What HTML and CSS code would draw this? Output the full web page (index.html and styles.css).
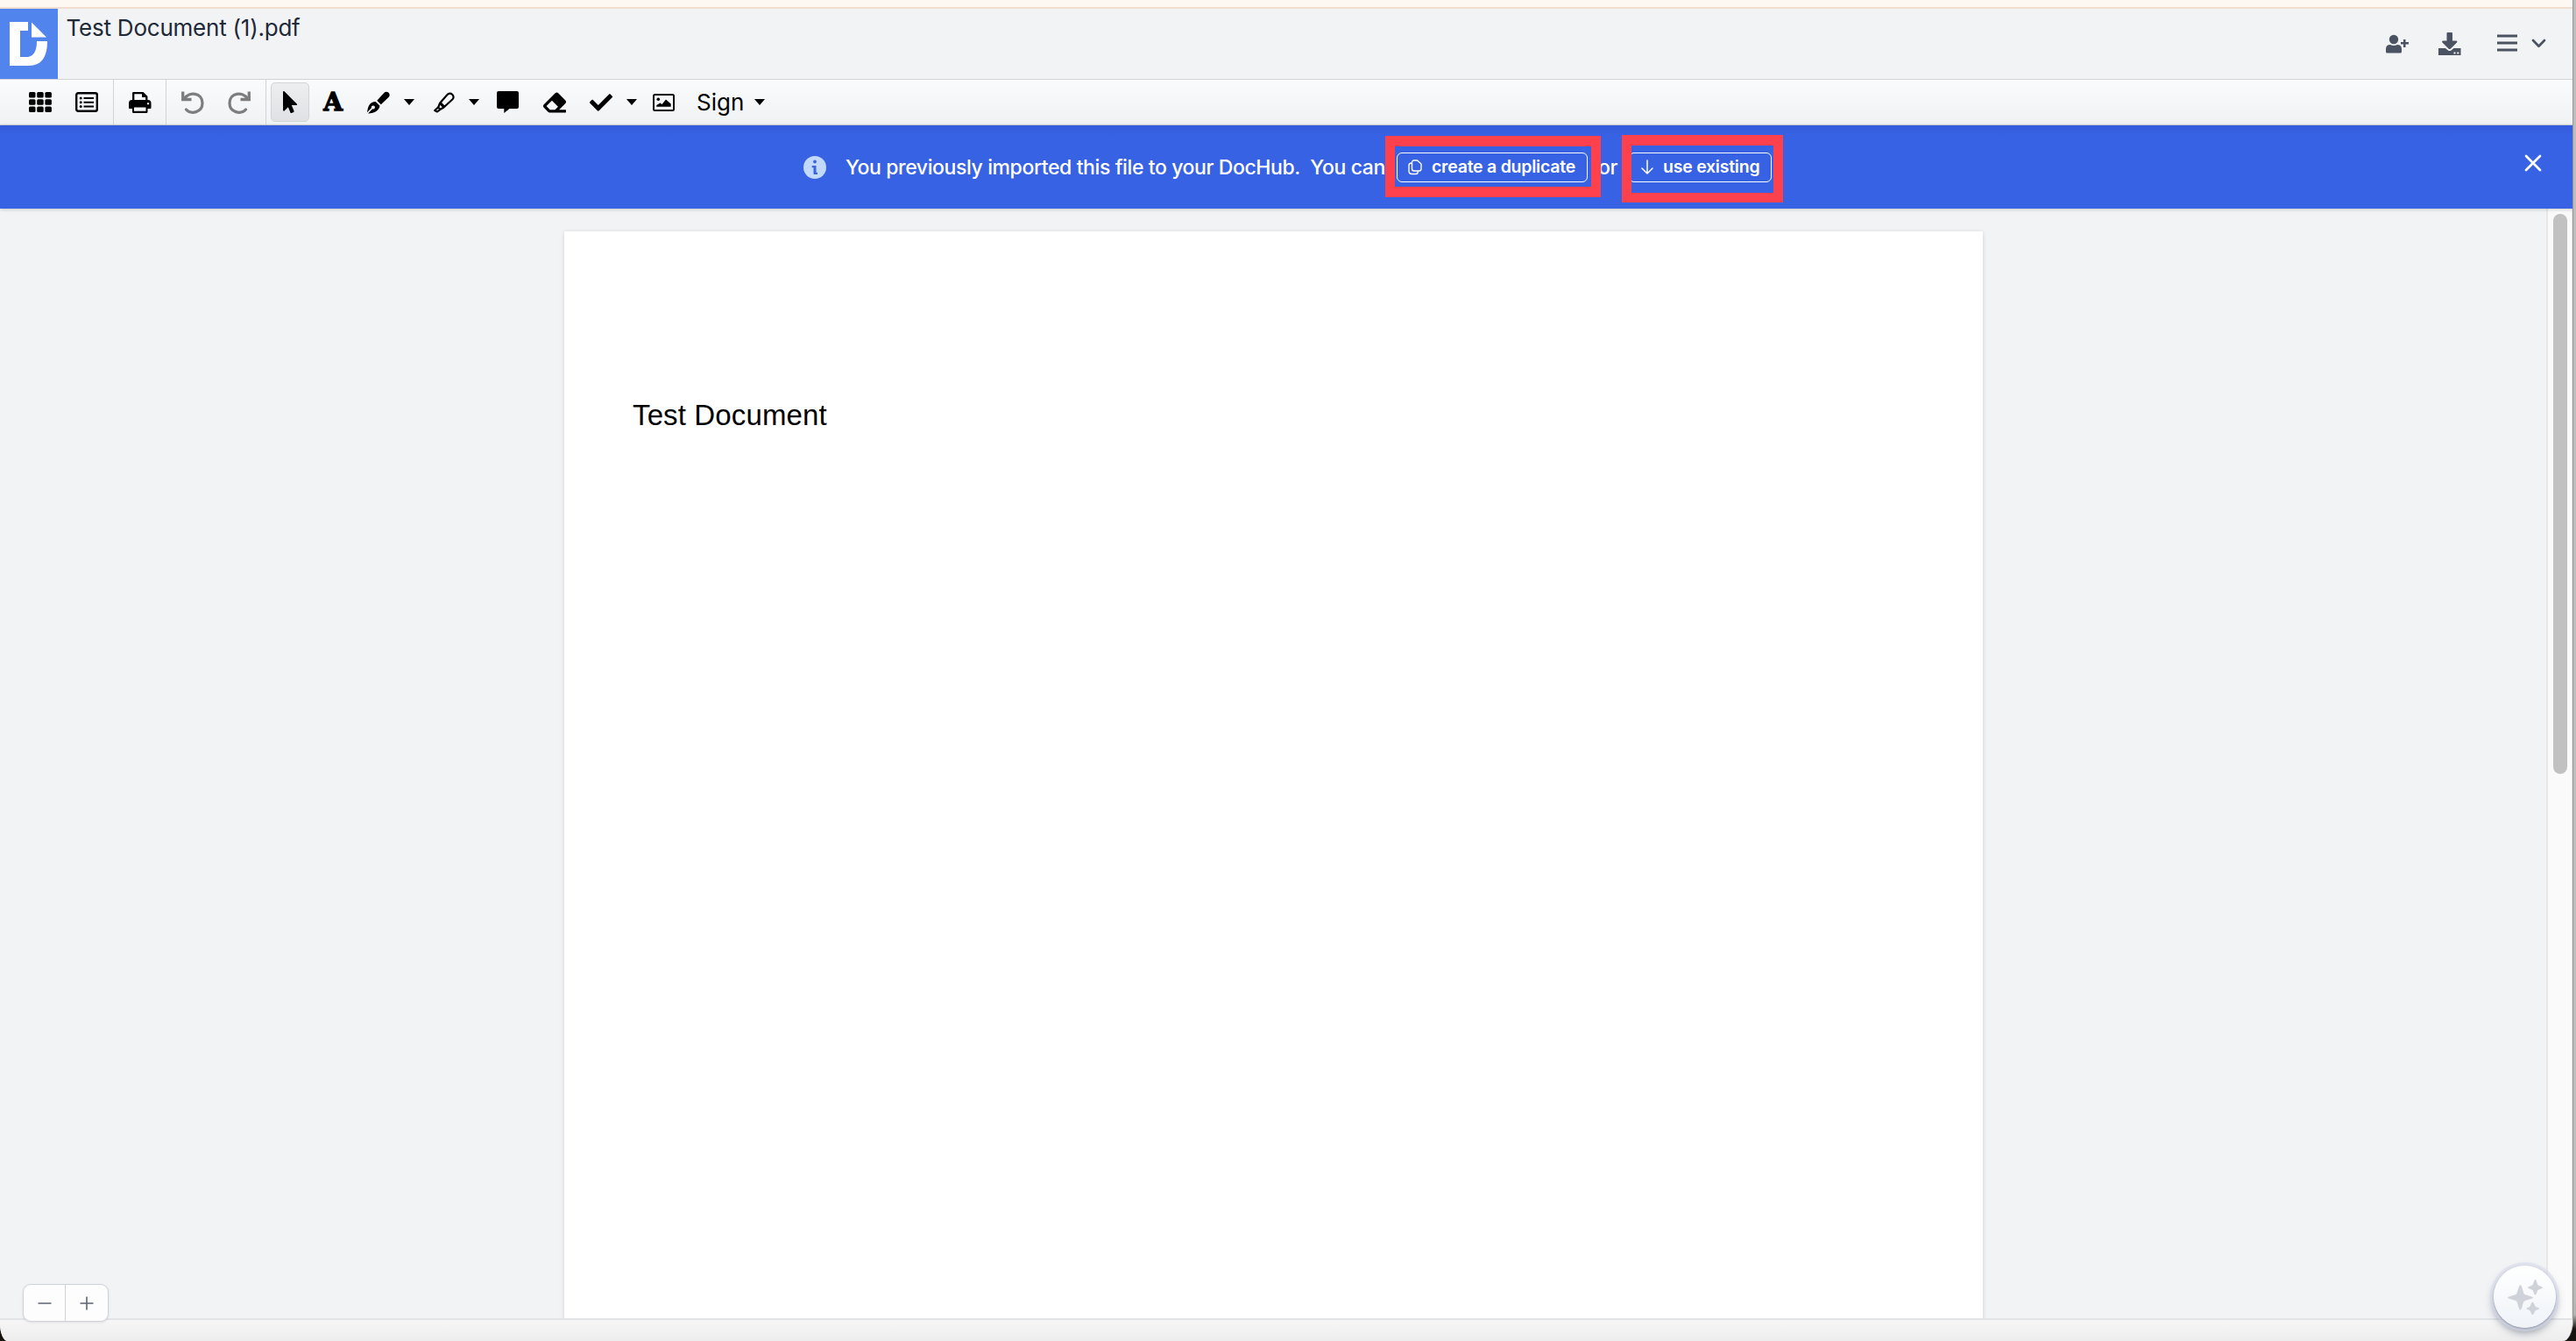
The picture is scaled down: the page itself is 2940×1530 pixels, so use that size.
FILE: index.html
```html
<!DOCTYPE html>
<html lang="en">
<head>
<meta charset="utf-8">
<title>Test Document (1).pdf</title>
<link rel="stylesheet" href="styles.css">
</head>
<body>
<div class="window">
  <div class="strip"></div>
  <header class="header">
    <div class="logo">
      <svg width="66" height="80" viewBox="0 0 66 80"><path fill="#fff" d="M11 15H32V25H23V55H32Q42 53 42 37H54Q54 65 33 65H11ZM36 15.500L53 32.500H36Z"/></svg>
    </div>
    <h1 class="filename">Test Document (1).pdf</h1>
    <div class="actions">
      <svg class="user" width="26" height="22" viewBox="0 0 26 22"><circle cx="9" cy="6" r="5.200"/><path d="M0 20V17Q0 12 5 12Q9 14 13 12Q18 12 18 17V20Q18 21.500 16.500 21.500H1.500Q0 21.500 0 20ZM20 6H22.500V9H26V11.500H22.500V15H20V11.500H17V9H20Z"/></svg>
      <svg class="download" width="26" height="26" viewBox="0 0 26 26"><path d="M9.500 1Q9.500 0 10.500 0H15Q16 0 16 1V9.500H20.500Q22 10 21 11.500L14 18.500Q12.800 19.500 11.500 18.500L4.500 11.500Q3.500 10 5 9.500H9.500Z"/><path fill-rule="evenodd" d="M0 18H8L11 20.500Q12.800 21.600 14.500 20.500L17.500 18H25.500V26H0ZM17.500 22.500V24.500H19.500V22.500ZM21.300 22.500V24.500H23.300V22.500Z"/></svg>
      <svg class="menu" width="23" height="21" viewBox="0 0 23 21"><path d="M0 .5H23V3.500H0ZM0 8.500H23V11.500H0ZM0 16.500H23V19.500H0Z"/></svg>
      <svg class="chevron" width="17" height="12" viewBox="0 0 17 12"><path fill="none" stroke="#4b5362" stroke-width="2.700" stroke-linecap="round" stroke-linejoin="round" d="M2 2L8.500 8.700L15 2"/></svg>
    </div>
  </header>

  <div class="toolbar">
    <div class="group pages">
      <div class="tool"><svg width="26" height="23" viewBox="0 0 26 23"><g><rect width="7.500" height="6.500" rx="1.500"/><rect x="9.200" width="7.500" height="6.500" rx="1.500"/><rect x="18.400" width="7.500" height="6.500" rx="1.500"/><rect y="8.200" width="7.500" height="6.500" rx="1.500"/><rect x="9.200" y="8.200" width="7.500" height="6.500" rx="1.500"/><rect x="18.400" y="8.200" width="7.500" height="6.500" rx="1.500"/><rect y="16.400" width="7.500" height="6.500" rx="1.500"/><rect x="9.200" y="16.400" width="7.500" height="6.500" rx="1.500"/><rect x="18.400" y="16.400" width="7.500" height="6.500" rx="1.500"/></g></svg></div>
      <div class="tool"><svg width="26" height="23" viewBox="0 0 26 23"><rect x="1.200" y="1.200" width="23.600" height="20.600" rx="2" fill="none" stroke="#000" stroke-width="2.400"/><circle cx="6.200" cy="7" r="1.500"/><circle cx="6.200" cy="11.700" r="1.500"/><circle cx="6.200" cy="16.400" r="1.500"/><path d="M9.500 6H21V8.100H9.500ZM9.500 10.700H21V12.800H9.500ZM9.500 15.400H21V17.500H9.500Z"/></svg></div>
    </div>
    <div class="group print">
      <div class="tool"><svg width="26" height="24" viewBox="0 0 26 24"><path d="M5.200 10V1.200H16.200L20.300 5.200V10" fill="none" stroke="#000" stroke-width="2.300" stroke-linejoin="round"/><path d="M15 1V6H21Z"/><path fill-rule="evenodd" d="M3.500 9H22Q25.500 9 25.500 13V18Q25.500 19 24.500 19H21.500V22.500Q21.500 24 20 24H5.500Q4 24 4 22.500V19H1Q0 19 0 18V13Q0 9 3.500 9ZM6 17.500V21.700H19.500V17.500ZM21 12.200V14.200H23.200V12.200Z"/></svg></div>
    </div>
    <div class="group history">
      <div class="tool"><svg width="26" height="26" viewBox="0 0 26 26"><g fill="none" stroke="#7d7d7d" stroke-width="3.200"><path d="M3.500 8.500C9 0 24 1.500 24 13.500C24 24.500 11 27 5.500 21" stroke-linecap="round"/><path d="M1.700 .500V9.500H11.500" stroke-width="3.300"/></g></svg></div>
      <div class="tool"><svg width="26" height="26" viewBox="0 0 26 26"><g fill="none" stroke="#7d7d7d" stroke-width="3.200" transform="matrix(-1 0 0 1 26 0)"><path d="M3.500 8.500C9 0 24 1.500 24 13.500C24 24.500 11 27 5.500 21" stroke-linecap="round"/><path d="M1.700 .500V9.500H11.500" stroke-width="3.300"/></g></svg></div>
    </div>
    <div class="group edit">
      <div class="tool selected"><svg width="16" height="25" viewBox="0 0 320 512" preserveAspectRatio="none"><path d="M302.189 329.126H196.105l55.831 135.993c3.889 9.428-.555 19.999-9.444 23.999l-49.165 21.427c-9.165 4-19.443-.571-23.332-9.714l-53.053-129.136-86.664 89.138C18.729 472.710 0 463.554 0 447.977V18.299C0 1.899 19.921-6.096 30.277 5.443l284.412 292.542c11.472 11.179 3.007 31.141-12.500 31.141z"/></svg></div>
      <div class="tool letter">A</div>
      <div class="tool pen"><svg width="26" height="26" viewBox="0 0 26 26"><path d="M11.300 10.800L19.500 1.800C22.500-1.200 28 3.200 24.700 6.700L15.800 15.300ZM9.700 12L14.500 16.800C13.500 22.200 9 25 1 25.500L6.200 20.300A2 2 0 1 0 5 19L0 24.300C1 17 3 12.300 9.700 12Z"/></svg></div>
      <div class="caret"></div>
      <div class="tool marker"><svg width="24" height="24" viewBox="0 0 24 24"><path fill="none" stroke="#000" stroke-width="2.200" stroke-linejoin="round" d="M7 12.800L15.500 3C19-1 25 4.500 21.500 8.300L11.500 17.500ZM7 12.800L5.200 17.500L7.500 19.800L11.500 17.500M5 17.500L1.200 21L4 22.500L7.500 19.800M8 12.500L12.500 17"/></svg></div>
      <div class="caret tight"></div>
      <div class="tool comment"><svg width="25" height="25" viewBox="0 0 25 25"><path d="M2 0H23Q25 0 25 2V18Q25 20 23 20H14.500L8.300 25V20H2Q0 20 0 18V2Q0 0 2 0Z"/></svg></div>
      <div class="tool eraser"><svg width="26" height="26" viewBox="0 0 512 512"><path d="M497.941 273.941c18.745-18.745 18.745-49.137 0-67.882l-160-160c-18.745-18.745-49.136-18.746-67.883 0l-256 256c-18.745 18.745-18.745 49.137 0 67.882l96 96A48.004 48.004 0 0 0 144 480h356c6.627 0 12-5.373 12-12v-40c0-6.627-5.373-12-12-12H355.883l142.058-142.059zm-302.627-62.627l137.373 137.373L265.373 416H150.628l-80-80 124.686-124.686z"/></svg></div>
      <div class="tool check"><svg width="26" height="26" viewBox="0 0 512 512"><path d="M173.898 439.404l-166.400-166.400c-9.997-9.997-9.997-26.206 0-36.204l36.203-36.204c9.997-9.998 26.207-9.998 36.204 0L192 312.690 432.095 72.596c9.997-9.997 26.207-9.997 36.204 0l36.203 36.204c9.997 9.997 9.997 26.206 0 36.204l-294.400 294.401c-9.998 9.997-26.207 9.997-36.204-.001z"/></svg></div>
      <div class="caret wide"></div>
      <div class="tool image"><svg width="25" height="20" viewBox="0 0 25 20"><rect x="1" y="1" width="23" height="18" rx="1.500" fill="none" stroke="#000" stroke-width="2"/><circle cx="6.300" cy="6.300" r="1.800"/><path d="M4.300 14.800V13L8.500 10.500L10.500 12L15 6.500L20.700 11.500V14.800Z"/></svg></div>
      <div class="sign">Sign</div>
      <div class="caret"></div>
    </div>
  </div>

  <div class="banner">
    <svg class="info" width="26" height="26" viewBox="0 0 26 26"><circle cx="13" cy="13" r="13" fill="#c3d9fc"/><g fill="#3b65dc"><circle cx="13" cy="6.500" r="1.900"/><path d="M9.700 11H14.500V18.800H16V21H12Q11.500 21 11.500 20V13.200H9.700Z"/></g></svg>
    <span class="message">You previously imported this file to your DocHub.&nbsp; You can</span>
    <div class="choice duplicate">
      <button class="button"><svg width="16" height="18" viewBox="0 0 16 18"><path fill="none" stroke="#fff" stroke-width="1.400" stroke-linejoin="round" d="M7 1H10.500L15 5V10.500Q15 13 12.500 13H7Q4.500 13 4.500 10.500V3.500Q4.500 1 7 1ZM4.500 4H4Q1 4 1 7V13Q1 16.500 4.500 16.500H9Q11.500 16.500 11.500 13"/></svg><span>create a duplicate</span></button>
      <div class="highlight"></div>
    </div>
    <span class="or">or</span>
    <div class="choice existing">
      <button class="button"><svg width="14" height="17" viewBox="0 0 14 17"><path fill="none" stroke="#fff" stroke-width="1.500" stroke-linecap="round" stroke-linejoin="round" d="M7 1V16M1 10L7 16L13 10"/></svg><span>use existing</span></button>
      <div class="highlight"></div>
    </div>
    <svg class="close" width="20" height="20" viewBox="0 0 20 20"><path stroke="#fff" stroke-width="2.700" stroke-linecap="round" d="M2 2L18 18M18 2L2 18"/></svg>
  </div>

  <div class="workspace">
    <main class="canvas">
      <article class="page"><p>Test Document</p></article>
    </main>
    <div class="scrollbar"><div class="thumb"></div></div>
  </div>
  <div class="bottom-track"></div>

  <div class="zoom">
    <button><svg width="16" height="16" viewBox="0 0 16 16"><path stroke="#5b6270" stroke-width="1.600" d="M.5 8H15.500"/></svg></button>
    <button><svg width="16" height="16" viewBox="0 0 16 16"><path stroke="#5b6270" stroke-width="1.600" d="M.5 8H15.500M8 .5V15.500"/></svg></button>
  </div>
  <button class="assistant"><svg width="40" height="40" viewBox="0 0 40 40"><path fill="#cfd2d8" d="M14.500 6C16.500 6 17.500 15 19 16.500S29 19 29 20.500S21 23 19 24.500S16.500 34.500 14.500 34.500S11.500 26 10 24.500S0 22 0 20.500S8.500 18 10 16.500S12.500 6 14.500 6ZM31.500 0C33 0 33.500 5 34.500 6S40 8 40 9S35.500 11 34.500 12S33 17.500 31.500 17.500S29.500 13 28.500 12S23 10 23 9S27.500 7 28.500 6S30 0 31.500 0ZM28.500 25.500C30 25.500 30.500 29.500 31.500 30.500S36 32 36 33S32.500 34.500 31.500 35.500S30 40 28.500 40S26.500 36.500 25.500 35.500S21.500 34 21.500 33S24.500 31.500 25.500 30.500S27 25.500 28.500 25.500Z"/></svg></button>
</div>
</body>
</html>
```
FILE: styles.css
```css
* { box-sizing: border-box; }
body {
  margin: 0;
  width: 2940px;
  height: 1530px;
  overflow: hidden;
  background: linear-gradient(#bdbdbd 0 1440px, #b4b4b2 1500px, #17140f 1516px);
  font-family: Inter, sans-serif;
}
svg { display: block; flex: none; }
button { font: inherit; padding: 0; border: 0; background: none; color: inherit; }

.window {
  position: relative;
  display: flex;
  flex-direction: column;
  width: 2937px;
  height: 1530px;
  overflow: hidden;
  background: #f2f3f5;
  border-right: 1px solid #969696;
  border-radius: 0 0 12px 9px / 0 0 24px 20px;
}
.strip { height: 10px; flex: none; background: #fef8f3; border-bottom: 2px solid #f0dfd1; }

.header { display: flex; height: 81px; flex: none; border-bottom: 1px solid #d1d3d7; background: #f2f3f5; }
.logo { width: 66px; height: 80px; background: #5284ee; }
.filename { margin: 6px 0 0 9.500px; font-size: 26px; font-weight: 400; line-height: 32px; letter-spacing: -.220px; color: #202938; white-space: nowrap; }
.actions { display: flex; align-items: center; margin-left: auto; padding: 0 30px 1px 0; fill: #4b5362; }
.download { margin-left: 34px; }
.menu { margin-left: 41px; }
.chevron { margin-left: 16px; }

.toolbar {
  display: flex;
  height: 52px;
  flex: none;
  border-bottom: 1px solid #cfd1d6;
  background: linear-gradient(#fafbfd, #f1f2f4);
}
.group { display: flex; align-items: center; justify-content: center; flex: none; border-right: 1px solid #d1d3d7; }
.pages { width: 130px; padding-left: 16px; }
.print { width: 60px; }
.history { width: 114px; }
.edit { border: 0; padding-left: 5px; }
.tool { display: flex; align-items: center; justify-content: center; width: 53px; flex: none; }
.selected { width: 44px; height: 45px; border: 1.500px solid #d0d3d8; border-radius: 5px; background: linear-gradient(#edeef0, #dfe1e4); }
.letter { width: 54px; font: bold 28px/46px "DejaVu Serif", serif; -webkit-text-stroke: 1.300px #000; }
.pen { width: 50px; }
.marker { width: 57px; margin-left: 2px; }
.comment { width: 67px; }
.eraser { width: 40px; }
.check { width: 54px; margin-left: 6px; }
.image { width: 59px; }
.sign { margin-left: 8px; width: 62px; font-size: 26px; line-height: 46px; }
.caret { display: flex; justify-content: center; width: 19px; flex: none; }
.caret.tight { width: 11px; }
.caret.wide { width: 15px; }
.caret::before { content: ""; flex: none; border: 6px solid transparent; border-top: 7px solid #000; border-bottom: 0; }

.banner {
  position: relative;
  z-index: 1;
  display: flex;
  align-items: center;
  height: 95px;
  flex: none;
  padding: 0 35px 0 917px;
  background: linear-gradient(#345cdb, #3862e4 12px);
  box-shadow: 0 1px 4px rgba(0, 0, 0, .2);
  color: #fff;
  font-size: 23px;
}
.message { width: 629px; margin-left: 22px; font-weight: 500; letter-spacing: -.395px; white-space: nowrap; }
.choice { position: relative; flex: none; }
.button {
  display: flex;
  align-items: center;
  width: 218px;
  height: 34px;
  padding-left: 12px;
  border: 1px solid #fff;
  border-radius: 6px;
  font-size: 19.500px;
  font-weight: 600;
  letter-spacing: -.240px;
  white-space: nowrap;
}
.button span { margin: -1px 0 0 11px; }
.or { width: 35px; margin-left: 12px; font-weight: 500; letter-spacing: -.400px; }
.existing .button { width: 163px; padding-left: 13px; }
.highlight { position: absolute; pointer-events: none; border: 11px solid #ff404d; }
.duplicate .highlight { left: -13px; top: -19px; width: 246px; height: 70px; border-width: 12px 11px; }
.existing .highlight { left: -8px; top: -20px; width: 184px; height: 77px; border-width: 12px 11px 11px; }
.close { margin: -10px 0 0 auto; }

.workspace { display: flex; height: 1266px; flex: none; }
.canvas { flex: 1; padding: 26px 0 0 644px; overflow: hidden; background: #f2f3f5; }
.page { width: 1619px; height: 1300px; padding: 187px 0 0 78px; background: #fff; box-shadow: 0 1px 5px rgba(0, 0, 0, .14); }
.page p { margin: 0; font: 33px/46px "Liberation Sans", sans-serif; letter-spacing: .130px; color: #000; white-space: nowrap; }
.scrollbar { width: 30px; padding: 6px 5px 0 6px; background: #fafafa; border-left: 2px solid #e8e8e8; border-right: 1px solid #e4e4e4; }
.thumb { width: 16px; height: 639px; border-radius: 8px; background: #c1c1c1; }
.bottom-track { height: 26px; flex: none; border-top: 2px solid #e2e3e4; background: linear-gradient(#f6f6f7, #ededed); }

.zoom {
  position: absolute;
  left: 26px;
  top: 1465px;
  display: flex;
  width: 98px;
  height: 43px;
  border: 1px solid #cfd2d8;
  border-radius: 9px;
  background: #fdfdfe;
  box-shadow: 0 1px 3px rgba(0, 0, 0, .1);
}
.zoom button { display: flex; flex: none; width: 47px; align-items: center; justify-content: center; }
.zoom button + button { width: 49px; border-left: 1px solid #cfd2d8; }
.assistant {
  position: absolute;
  left: 2846px;
  top: 1444px;
  display: flex;
  align-items: center;
  justify-content: center;
  width: 71px;
  height: 71px;
  border-radius: 50%;
  background: linear-gradient(#fff, #eff3f8);
  box-shadow: 0 1px 2px rgba(90, 105, 135, .5), 0 0 0 4px rgba(215, 219, 235, .6), 0 5px 9px 1px rgba(70, 80, 100, .5);
}
```
